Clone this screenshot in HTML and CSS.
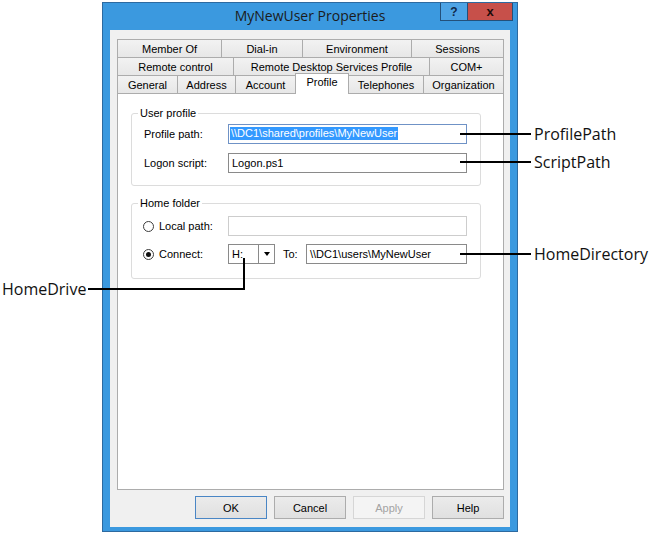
FILE: index.html
```html
<!DOCTYPE html>
<html>
<head>
<meta charset="utf-8">
<title>MyNewUser Properties</title>
<link rel="stylesheet" href="styles.css">
</head>
<body>
<div class="page">
  <div class="window">
    <div class="titlebar">
      <div class="title-spacer"></div>
      <div class="title">MyNewUser Properties</div>
      <div class="caption">
        <div class="cap cap-help">?</div>
        <div class="cap cap-close">x</div>
      </div>
    </div>
    <div class="client">
      <div class="tabs">
        <div class="tabrow">
          <div class="tab t-member">Member Of</div>
          <div class="tab t-dialin">Dial-in</div>
          <div class="tab t-env">Environment</div>
          <div class="tab t-sessions">Sessions</div>
        </div>
        <div class="tabrow">
          <div class="tab t-remote">Remote control</div>
          <div class="tab t-rds">Remote Desktop Services Profile</div>
          <div class="tab t-com">COM+</div>
        </div>
        <div class="tabrow">
          <div class="tab t-general">General</div>
          <div class="tab t-address">Address</div>
          <div class="tab t-account">Account</div>
          <div class="tab t-profile selected">Profile</div>
          <div class="tab t-phones">Telephones</div>
          <div class="tab t-org">Organization</div>
        </div>
      </div>
      <div class="panel">
        <fieldset class="group group-profile">
          <legend>User profile</legend>
          <div class="fields">
            <div class="label">Profile path:</div>
            <div class="textbox focused"><span class="sel">\\DC1\shared\profiles\MyNewUser</span></div>
            <div class="label">Logon script:</div>
            <div class="textbox">Logon.ps1</div>
          </div>
        </fieldset>
        <fieldset class="group group-home">
          <legend>Home folder</legend>
          <div class="fields home-fields">
            <div class="radio-label"><span class="radio"></span>Local path:</div>
            <div class="textbox disabled"></div>
            <div class="radio-label"><span class="radio checked"></span>Connect:</div>
            <div class="connect">
              <div class="combo"><div class="combo-value">H:</div><div class="combo-arrow"></div></div>
              <div class="to-label">To:</div>
              <div class="textbox grow">\\DC1\users\MyNewUser</div>
            </div>
          </div>
        </fieldset>
      </div>
      <div class="buttons">
        <div class="btn btn-default">OK</div>
        <div class="btn">Cancel</div>
        <div class="btn btn-disabled">Apply</div>
        <div class="btn">Help</div>
      </div>
    </div>
  </div>

  <div class="callout-line ln-profile"></div>
  <div class="callout-text cl-profile">ProfilePath</div>
  <div class="callout-line ln-script"></div>
  <div class="callout-text cl-script">ScriptPath</div>
  <div class="callout-line ln-homedir"></div>
  <div class="callout-text cl-homedir">HomeDirectory</div>
  <div class="callout-line ln-drive-h"></div>
  <div class="callout-line ln-drive-v"></div>
  <div class="callout-text cl-drive">HomeDrive</div>
</div>
</body>
</html>
```

FILE: styles.css
```css
html, body {
  margin: 0;
  padding: 0;
  background: #ffffff;
}

.page {
  position: relative;
  width: 650px;
  height: 533px;
  overflow: hidden;
  font-family: "Liberation Sans", Arial, sans-serif;
  font-size: 11px;
  color: #000;
}

/* ---------- window frame ---------- */
.window {
  margin-left: 102px;
  margin-top: 2px;
  width: 416px;
  height: 530px;
  box-sizing: border-box;
  border: 1px solid #2d6aa0;
  background: #3b99df;
  display: flex;
  flex-direction: column;
}

.titlebar {
  height: 27px;
  flex: none;
  display: grid;
  grid-template-columns: 1fr auto 1fr;
  align-items: start;
}

.title {
  font-family: "Open Sans", "Noto Sans", sans-serif;
  font-size: 14px;
  line-height: 25px;
  color: #1b1b1b;
}

.caption {
  justify-self: end;
  margin-right: 4px;
  display: flex;
}

.cap {
  height: 18px;
  box-sizing: border-box;
  border: 1px solid #23507a;
  border-top: none;
  display: flex;
  align-items: center;
  justify-content: center;
  font-family: "Liberation Sans", Arial, sans-serif;
  font-weight: bold;
  font-size: 12px;
}

.cap-help {
  width: 28px;
  background: #4ea4e5;
  color: #10294a;
}

.cap-close {
  width: 46px;
  margin-left: -1px;
  background: #c7504a;
  color: #1e0b0b;
  font-size: 13px;
  line-height: 12px;
}

/* ---------- client ---------- */
.client {
  flex: 1;
  margin: 0 7px 4px 7px;
  background: #f0f0f0;
  display: flex;
  flex-direction: column;
  padding: 9px 6px 8px 7px;
}

.tabrow {
  display: flex;
  height: 19px;
}

.tabrow + .tabrow {
  margin-top: -1px;
}

.tab {
  box-sizing: border-box;
  height: 19px;
  border: 1px solid #acacac;
  background: linear-gradient(#f2f2f2, #e7e7e7);
  display: flex;
  align-items: center;
  justify-content: center;
  white-space: nowrap;
}

.tab + .tab {
  margin-left: -1px;
}

.tab.selected {
  position: relative;
  z-index: 1;
  height: 21px;
  margin-top: -2px;
  border-bottom: none;
  background: #ffffff;
  align-items: flex-start;
  padding-top: 2px;
}

.t-member { width: 105px; }
.t-dialin { width: 82px; }
.t-env { width: 110px; }
.t-sessions { width: 93px; }
.t-remote { width: 117px; }
.t-rds { width: 197px; }
.t-com { width: 75px; }
.t-general { width: 61px; }
.t-address { width: 59px; }
.t-account { width: 61px; }
.t-profile { width: 54px; }
.t-phones { width: 76px; }
.t-org { width: 81px; }

.panel {
  flex: 1;
  margin-top: -1px;
  border: 1px solid #acacac;
  background: #ffffff;
}

/* ---------- group boxes ---------- */
.group {
  margin: 13px 0 0 13px;
  width: 350px;
  box-sizing: border-box;
  border: 1px solid #dcdcdc;
  border-radius: 3px;
  padding: 4px 12px 12px 6px;
  min-width: 0;
}

.group legend {
  padding: 0 2px;
  font-size: 11px;
  line-height: 13px;
}

.group-home {
  margin-top: 11px;
  padding: 6px 12px 14px 6px;
}

.fields {
  display: grid;
  grid-template-columns: 84px 239px;
  row-gap: 9px;
  align-items: center;
  margin-left: 6px;
}

.home-fields {
  row-gap: 8px;
}

.label {
  white-space: nowrap;
}

.textbox {
  height: 20px;
  box-sizing: border-box;
  border: 1px solid #8a8a8a;
  background: #ffffff;
  padding-left: 3px;
  line-height: 18px;
  white-space: nowrap;
  overflow: hidden;
}

.textbox.focused {
  border-color: #6f92c6;
  padding-left: 1px;
}

.textbox.disabled {
  border-color: #cdcdcd;
}

.sel {
  display: inline-block;
  vertical-align: top;
  margin-top: 2px;
  line-height: 13px;
  padding: 0 1px;
  background: #3399ff;
  color: #ffffff;
}

.radio-label {
  display: flex;
  align-items: center;
  gap: 5px;
  margin-left: -1px;
  white-space: nowrap;
}

.radio {
  width: 11px;
  height: 11px;
  box-sizing: border-box;
  border: 1px solid #3c3c3c;
  border-radius: 50%;
  background: #ffffff;
  display: flex;
  align-items: center;
  justify-content: center;
}

.radio.checked::after {
  content: "";
  width: 5px;
  height: 5px;
  border-radius: 50%;
  background: #111111;
}

.connect {
  display: flex;
  align-items: center;
}

.combo {
  width: 47px;
  height: 20px;
  box-sizing: border-box;
  border: 1px solid #8a8a8a;
  display: flex;
  background: #ffffff;
}

.combo-value {
  flex: 1;
  padding-left: 3px;
  line-height: 18px;
  border-right: 1px solid #8a8a8a;
}

.combo-arrow {
  width: 15px;
  display: flex;
  align-items: center;
  justify-content: center;
}

.combo-arrow::before {
  content: "";
  border-left: 3px solid transparent;
  border-right: 3px solid transparent;
  border-top: 4px solid #000;
}

.to-label {
  margin-left: 8px;
  width: 23px;
}

.grow {
  flex: 1;
}

/* ---------- dialog buttons ---------- */
.buttons {
  display: flex;
  justify-content: flex-end;
  gap: 7px;
  margin-top: 6px;
}

.btn {
  width: 72px;
  height: 23px;
  box-sizing: border-box;
  border: 1px solid #acacac;
  background: linear-gradient(#ebebeb, #e0e0e0);
  display: flex;
  align-items: center;
  justify-content: center;
}

.btn-default {
  border-color: #4a86c5;
}

.btn-disabled {
  background: #f4f4f4;
  border-color: #d6d6d6;
  color: #a3a3a3;
}

/* ---------- callouts (annotations over the screenshot) ---------- */
.callout-line {
  position: absolute;
  background: #000000;
  height: 2px;
}

.ln-profile { left: 460px; top: 133px; width: 71px; }
.ln-script { left: 460px; top: 161px; width: 71px; }
.ln-homedir { left: 460px; top: 253px; width: 71px; }
.ln-drive-h { left: 88px; top: 288px; width: 157px; }
.ln-drive-v { left: 243px; top: 258px; width: 2px; height: 32px; }

.callout-text {
  position: absolute;
  font-family: "Open Sans", "Noto Sans", sans-serif;
  font-size: 16px;
  line-height: 20px;
  color: #111111;
  white-space: nowrap;
}

.cl-profile { left: 534px; top: 124px; }
.cl-script { left: 534px; top: 152px; }
.cl-homedir { left: 534px; top: 244px; }
.cl-drive { left: 2px; top: 279px; }
```
